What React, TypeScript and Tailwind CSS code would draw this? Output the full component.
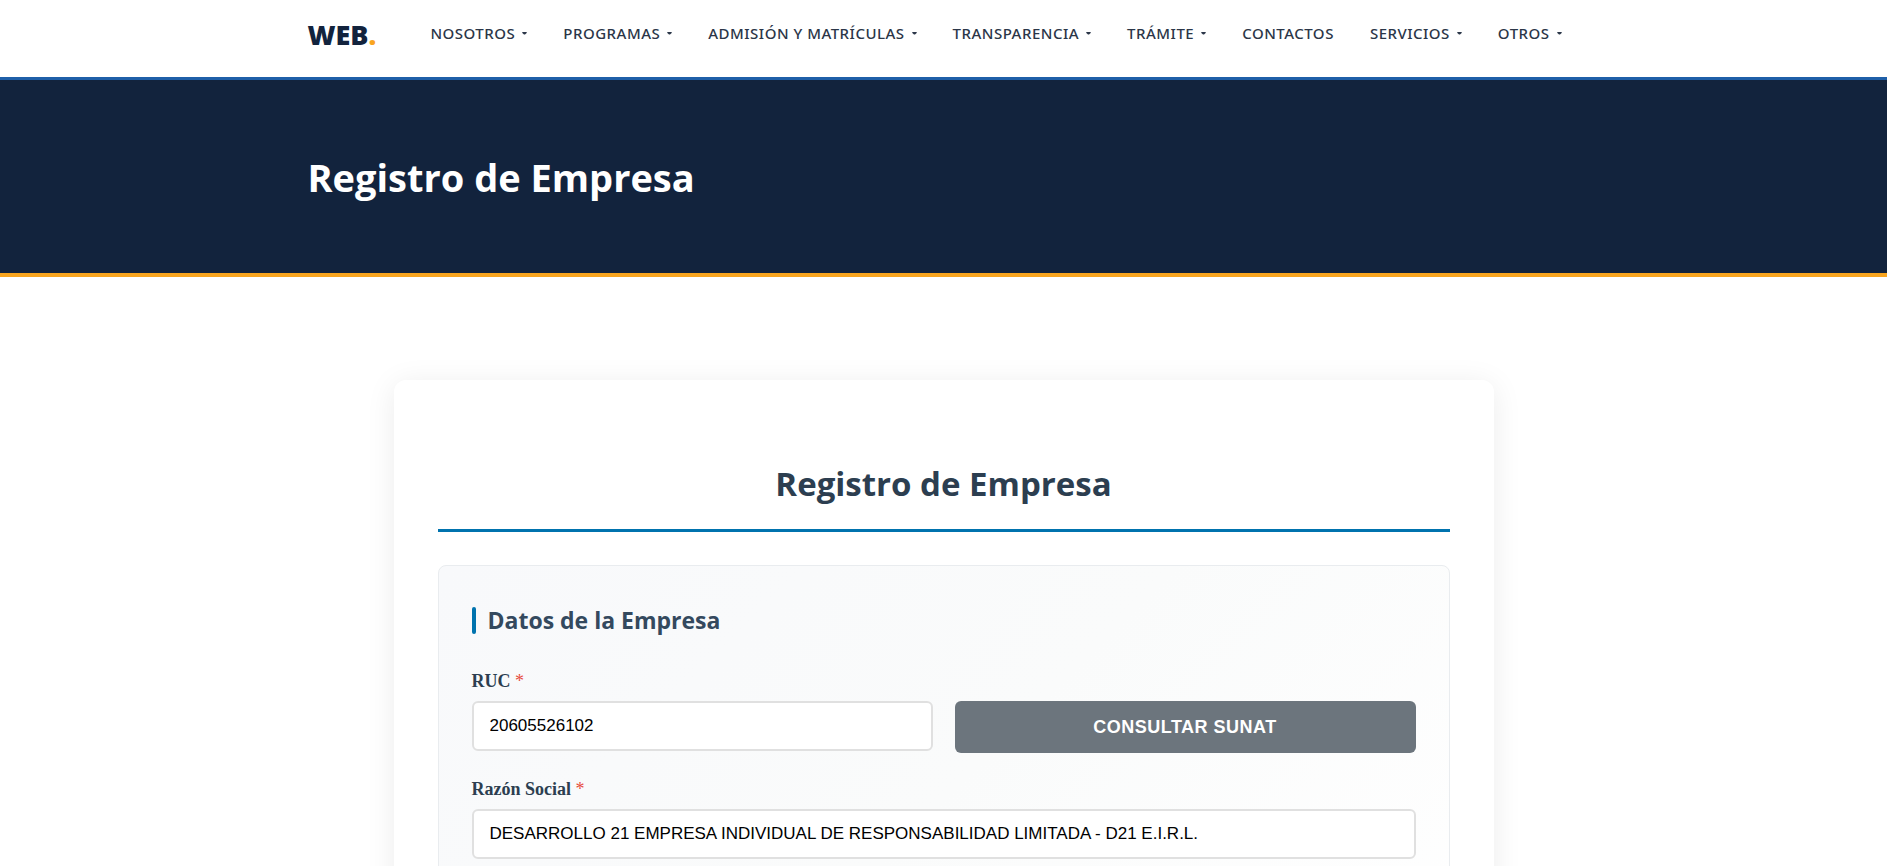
import { useState } from "react";

interface NavItem {
  label: string;
  hasMenu: boolean;
}

const NAV_ITEMS: NavItem[] = [
  { label: "Nosotros", hasMenu: true },
  { label: "Programas", hasMenu: true },
  { label: "Admisión y Matrículas", hasMenu: true },
  { label: "Transparencia", hasMenu: true },
  { label: "Trámite", hasMenu: true },
  { label: "Contactos", hasMenu: false },
  { label: "Servicios", hasMenu: true },
  { label: "Otros", hasMenu: true },
];

function Caret() {
  return (
    <svg width="5" height="3" viewBox="0 0 5 3" fill="currentColor">
      <path d="M0.3 0h4.4v1L3 2.4H2L0.3 1z" />
    </svg>
  );
}

function Header() {
  return (
    <header className="h-20 border-b-[3px] border-[#1f5fa8] bg-white">
      <div className="mx-auto flex max-w-[1320px] items-start px-6 pt-3">
        <a
          href="#"
          className="mr-[54px] font-['Open_Sans',sans-serif] text-[27px] leading-[46px] font-extrabold text-[#12233d]"
        >
          WEB<span className="text-[#f9a51f]">.</span>
        </a>
        <nav className="flex flex-1 items-center gap-9">
          {NAV_ITEMS.map((item) => (
            <a
              key={item.label}
              href="#"
              className="flex items-center gap-[7px] text-[15px] leading-[42px] font-medium tracking-[0.5px] whitespace-nowrap text-[#2b3648] uppercase"
            >
              {item.label}
              {item.hasMenu && <Caret />}
            </a>
          ))}
        </nav>
      </div>
    </header>
  );
}

function Hero() {
  return (
    <section className="border-b-4 border-[#f9a51f] bg-[#12233d] pt-[73px] pb-[71px]">
      <div className="mx-auto max-w-[1320px] px-6">
        <h1 className="font-['Open_Sans',sans-serif] text-[38px] leading-[49px] font-bold text-white">
          Registro de Empresa
        </h1>
      </div>
    </section>
  );
}

interface FieldProps {
  id: string;
  label: string;
  value: string;
  onChange: (value: string) => void;
}

function FieldLabel({ id, label }: { id: string; label: string }) {
  return (
    <label
      htmlFor={id}
      className="mb-2 block font-['Liberation_Serif',serif] text-[18px] leading-6 font-bold text-[#2c3e50]"
    >
      {label} <span className="font-normal text-[#e74c3c]">*</span>
    </label>
  );
}

function TextField({ id, label, value, onChange }: FieldProps) {
  return (
    <div>
      <FieldLabel id={id} label={label} />
      <input
        id={id}
        type="text"
        value={value}
        onChange={(e) => onChange(e.target.value)}
        className="h-[50px] w-full rounded-md border-2 border-[#e0e0e0] bg-white px-4 font-['Liberation_Sans',sans-serif] text-[17px] text-black"
      />
    </div>
  );
}

export default function App() {
  const [ruc, setRuc] = useState("20605526102");
  const [razonSocial, setRazonSocial] = useState(
    "DESARROLLO 21 EMPRESA INDIVIDUAL DE RESPONSABILIDAD LIMITADA - D21 E.I.R.L."
  );

  return (
    <div className="h-screen overflow-hidden bg-white font-['Noto_Sans',sans-serif]">
      <Header />
      <Hero />

      <main className="px-6 pt-[103px]">
        <form
          onSubmit={(e) => e.preventDefault()}
          className="mx-auto max-w-[1100px] rounded-xl bg-white px-11 pt-20 pb-11 shadow-[0_4px_30px_rgba(0,0,0,0.08)]"
        >
          <h2 className="mb-[33px] border-b-[3px] border-[#0073ae] pb-[21px] text-center font-['Open_Sans',sans-serif] text-[33px] leading-12 font-bold text-[#2c3e50]">
            Registro de Empresa
          </h2>

          <section className="rounded-lg border border-[#e9ecef] bg-linear-135 from-[#f8f9fb] via-[#fafbfb] to-white px-[33px] pt-[33px] pb-40">
            <h3 className="mb-7 flex items-center gap-3 font-['Open_Sans',sans-serif] text-[23px] leading-[42px] font-bold text-[#34495e]">
              <span className="h-[27px] w-1 rounded-sm bg-[#0073ae]" />
              Datos de la Empresa
            </h3>

            <div className="mb-6 grid grid-cols-2 items-start gap-[22px]">
              <TextField
                id="ruc"
                label="RUC"
                value={ruc}
                onChange={setRuc}
              />
              <button
                type="button"
                className="mt-8 h-[52px] rounded-md bg-[#6c757d] font-['Liberation_Sans',sans-serif] text-[18px] font-bold tracking-[0.5px] text-white uppercase"
              >
                Consultar SUNAT
              </button>
            </div>

            <TextField
              id="razon-social"
              label="Razón Social"
              value={razonSocial}
              onChange={setRazonSocial}
            />
          </section>
        </form>
      </main>
    </div>
  );
}
